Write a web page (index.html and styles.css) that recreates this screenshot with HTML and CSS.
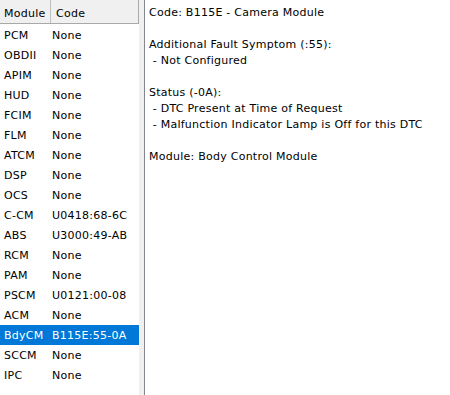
FILE: index.html
```html
<!DOCTYPE html>
<html lang="en">

<head>
    <meta charset="UTF-8">
    <title>DTC Viewer</title>
    <link rel="stylesheet" href="styles.css">
</head>

<body>
    <div class="app">
        <div class="list">
            <div class="list-head">
                <div class="head-mod">Module</div>
                <div class="head-code">Code</div>
            </div>
            <ul class="rows">
                <li><span class="mod">PCM</span><span class="code">None</span></li>
                <li><span class="mod">OBDII</span><span class="code">None</span></li>
                <li><span class="mod">APIM</span><span class="code">None</span></li>
                <li><span class="mod">HUD</span><span class="code">None</span></li>
                <li><span class="mod">FCIM</span><span class="code">None</span></li>
                <li><span class="mod">FLM</span><span class="code">None</span></li>
                <li><span class="mod">ATCM</span><span class="code">None</span></li>
                <li><span class="mod">DSP</span><span class="code">None</span></li>
                <li><span class="mod">OCS</span><span class="code">None</span></li>
                <li><span class="mod">C-CM</span><span class="code">U0418:68-6C</span></li>
                <li><span class="mod">ABS</span><span class="code">U3000:49-AB</span></li>
                <li><span class="mod">RCM</span><span class="code">None</span></li>
                <li><span class="mod">PAM</span><span class="code">None</span></li>
                <li><span class="mod">PSCM</span><span class="code">U0121:00-08</span></li>
                <li><span class="mod">ACM</span><span class="code">None</span></li>
                <li class="selected"><span class="mod">BdyCM</span><span class="code">B115E:55-0A</span></li>
                <li><span class="mod">SCCM</span><span class="code">None</span></li>
                <li><span class="mod">IPC</span><span class="code">None</span></li>
            </ul>
        </div>
        <div class="splitter"></div>
        <div class="detail">
            <p>Code: B115E - Camera Module</p>
            <p>Additional Fault Symptom (:55):<br>&nbsp;- Not Configured</p>
            <p>Status (-0A):<br>&nbsp;- DTC Present at Time of Request<br>&nbsp;- Malfunction Indicator Lamp is Off for this DTC</p>
            <p>Module: Body Control Module</p>
        </div>
    </div>
</body>

</html>
```

FILE: styles.css
```css
body {
    margin: 0;
    font-family: "DejaVu Sans", Tahoma, sans-serif;
    font-size: 11px;
    letter-spacing: 0.25px;
    color: #000;
    background: #f0f0f0;
}

.app {
    display: flex;
    width: 450px;
    height: 395px;
    overflow: hidden;
}

.list {
    width: 139px;
    flex-shrink: 0;
    background: #fff;
}

.list-head {
    display: flex;
    height: 23px;
    line-height: 20px;
    background: #f0f0f0;
    border-bottom: 1px solid #a9a9a9;
}

.head-mod {
    width: 46px;
    padding: 4px 0 0 4px;
    border-right: 1px solid #c0c0c0;
}

.head-code {
    flex: 1;
    padding: 4px 0 0 5px;
    border-right: 1px solid #a9a9a9;
}

.rows {
    list-style: none;
    margin: 1px 0 0 0;
    padding: 0;
}

.rows li {
    display: flex;
    height: 19px;
    padding-top: 1px;
    line-height: 20px;
}

.rows .mod {
    width: 48px;
    padding-left: 4px;
}

.rows .selected {
    background: #0078d7;
    color: #fff;
}

.splitter {
    width: 5px;
    flex-shrink: 0;
    background: #f0f0f0;
}

.detail {
    flex: 1;
    background: #fff;
    border-left: 1px solid #828790;
    padding: 5px 0 0 4px;
    line-height: 16px;
}

.detail p {
    margin: 0 0 16px 0;
}
```
